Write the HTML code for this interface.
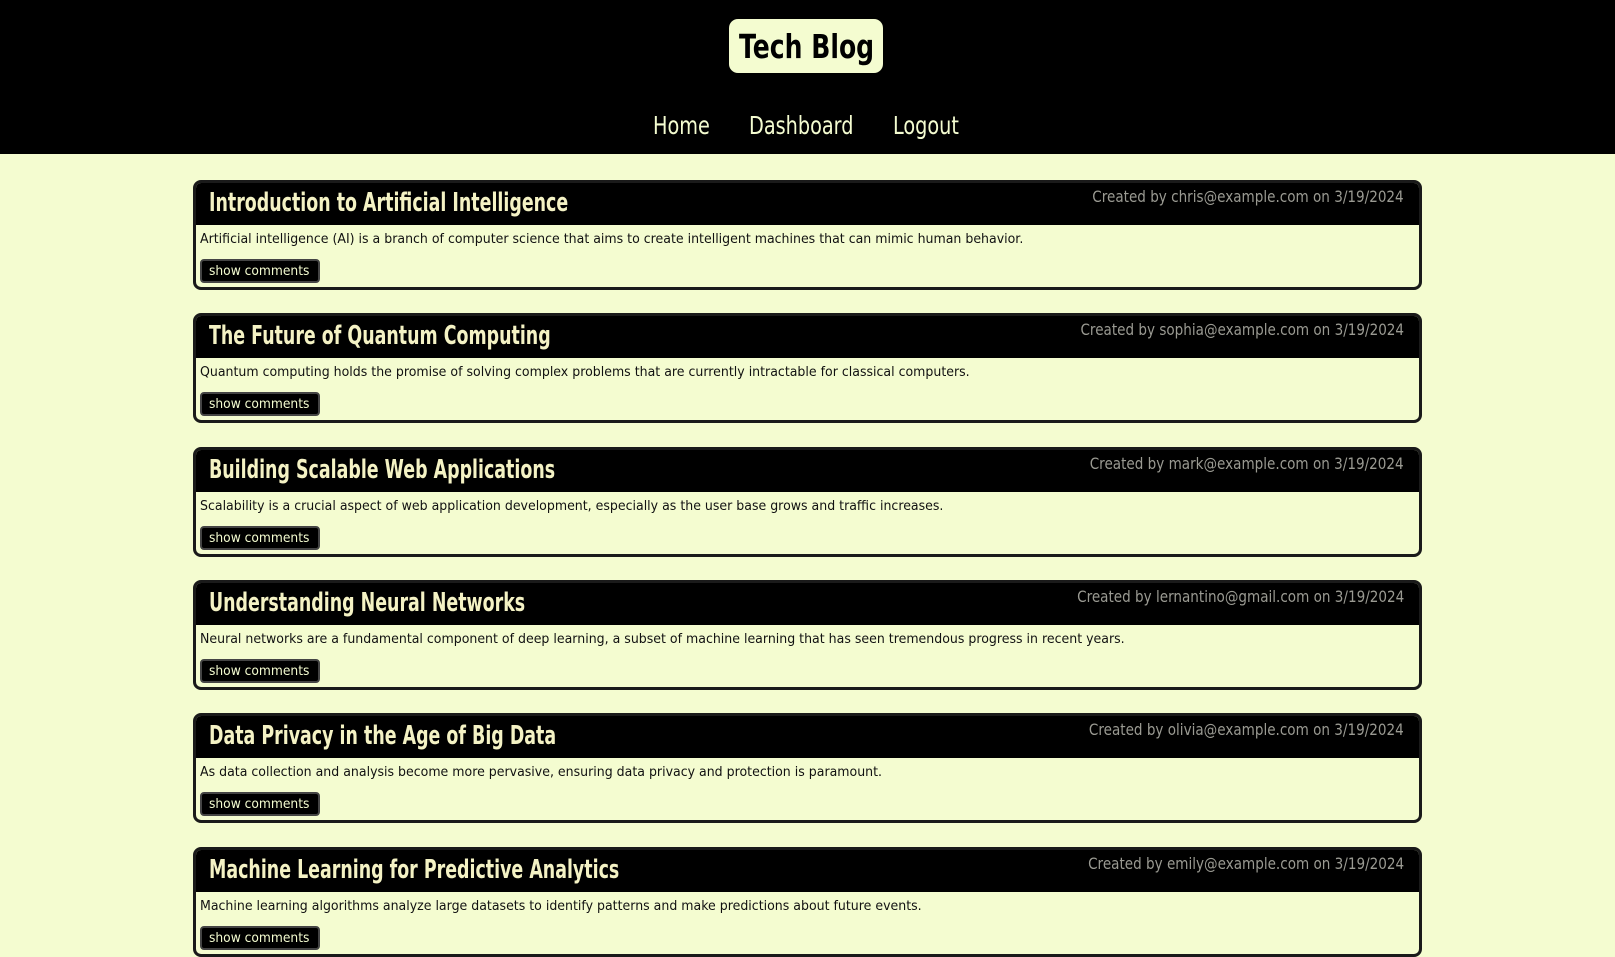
<!DOCTYPE html>
<html><head><meta charset="utf-8"><style>
*{margin:0;padding:0;box-sizing:border-box}
body{width:1615px;height:943px;overflow:hidden;background:#f4fcd0;font-family:"DejaVu Sans",sans-serif;position:relative}
header{position:absolute;left:0;top:0;width:1615px;height:154px;background:#000}
.logo{position:absolute;left:729px;top:19px;width:154px;height:54px;background:#f4fcd0;border-radius:9px}
.logo span{position:absolute;left:10px;top:8px;white-space:nowrap;color:#000;font-size:33px;font-weight:bold;transform:scaleX(.76);transform-origin:left top}
nav a{position:absolute;top:111px;color:#f4fcd0;font-size:25px;text-decoration:none;white-space:nowrap;transform:scaleX(.77);transform-origin:left top}
.card{position:absolute;left:193px;width:1229px;height:110px;border:3px solid #1a1a1a;border-radius:8px;overflow:hidden;background:#f4fcd0}
.hd{height:42px;background:#000;position:relative}
.hd h2{position:absolute;left:13px;top:5px;color:#f4f2c4;font-size:26px;font-weight:bold;white-space:nowrap;transform:scaleX(.67);transform-origin:left top}
.hd span{position:absolute;right:15px;top:4px;color:#9a9a92;font-size:16px;white-space:nowrap;transform:scaleX(.847);transform-origin:right top}
.card p{position:absolute;left:4px;top:48px;font-size:13.5px;color:#111;white-space:nowrap;transform:scaleX(.93);transform-origin:left top}
.btn{position:absolute;left:4px;top:76px;width:120px;height:24px;background:#000;border:2px solid #444;border-radius:4px}
.btn span{position:absolute;left:7px;top:2px;color:#f4fcd0;font-size:13.5px;white-space:nowrap;transform:scaleX(.91);transform-origin:left top}
</style></head><body>
<header><div class="logo"><span>Tech Blog</span></div>
<nav><a style="left:653px">Home</a><a style="left:749px">Dashboard</a><a style="left:893px">Logout</a></nav></header>

<div class="card" style="top:180px"><div class="hd"><h2>Introduction to Artificial Intelligence</h2><span>Created by chris@example.com on 3/19/2024</span></div><p>Artificial intelligence (AI) is a branch of computer science that aims to create intelligent machines that can mimic human behavior.</p><div class="btn"><span>show comments</span></div></div>

<div class="card" style="top:313px"><div class="hd"><h2>The Future of Quantum Computing</h2><span>Created by sophia@example.com on 3/19/2024</span></div><p>Quantum computing holds the promise of solving complex problems that are currently intractable for classical computers.</p><div class="btn"><span>show comments</span></div></div>

<div class="card" style="top:447px"><div class="hd"><h2>Building Scalable Web Applications</h2><span>Created by mark@example.com on 3/19/2024</span></div><p>Scalability is a crucial aspect of web application development, especially as the user base grows and traffic increases.</p><div class="btn"><span>show comments</span></div></div>

<div class="card" style="top:580px"><div class="hd"><h2>Understanding Neural Networks</h2><span>Created by lernantino@gmail.com on 3/19/2024</span></div><p>Neural networks are a fundamental component of deep learning, a subset of machine learning that has seen tremendous progress in recent years.</p><div class="btn"><span>show comments</span></div></div>

<div class="card" style="top:713px"><div class="hd"><h2>Data Privacy in the Age of Big Data</h2><span>Created by olivia@example.com on 3/19/2024</span></div><p>As data collection and analysis become more pervasive, ensuring data privacy and protection is paramount.</p><div class="btn"><span>show comments</span></div></div>

<div class="card" style="top:847px"><div class="hd"><h2>Machine Learning for Predictive Analytics</h2><span>Created by emily@example.com on 3/19/2024</span></div><p>Machine learning algorithms analyze large datasets to identify patterns and make predictions about future events.</p><div class="btn"><span>show comments</span></div></div>
</body></html>
